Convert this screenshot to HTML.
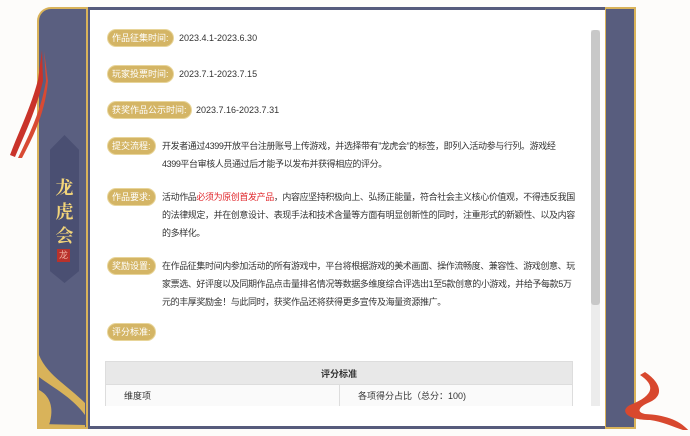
<!DOCTYPE html>
<html><head><meta charset="utf-8"><style>
*{margin:0;padding:0;box-sizing:border-box}
body{width:690px;height:436px;overflow:hidden;background:#fdfcfa;font-family:"Liberation Sans","Noto Sans CJK SC",sans-serif;position:relative}
.abs{position:absolute}
.lp{left:37px;top:7px;width:53px;height:422px;background:#5a5f80;border-radius:14px 0 0 0;border:2px solid #d9b35a;border-right:none}
.rp{left:605px;top:7px;width:31px;height:422px;background:#585d7e;border:2px solid #d9b35a;border-left:1px solid #d9b35a}
.frame{left:86px;top:7px;width:522px;height:422px;background:#565b7c;border-left:2px solid #d9b35a}
.white{left:90px;top:10px;width:515px;height:416px;background:#fff}
.tag{left:50px;top:135px;width:29px;height:148px;background:#4a4f72;clip-path:polygon(50% 0,100% 10%,100% 92%,50% 100%,0 92%,0 10%)}
.tc{left:50px;width:29px;text-align:center;color:#f3d57a;font-family:"Noto Serif CJK SC",serif;font-size:18px;font-weight:bold}
.seal{left:57px;top:249px;width:13px;height:13px;background:#b8322c;color:#f0b0a0;font-size:9px;text-align:center;line-height:13px}
.pill{position:absolute;left:107px;height:18px;padding:0 4px;background:#d4b565;border:1px solid #e8d59a;border-radius:9px;color:#fff;font-size:9px;line-height:16px;white-space:nowrap}
.t{position:absolute;font-size:9px;color:#333;line-height:18px;white-space:nowrap}
.w{letter-spacing:-0.4px}
.red{color:#e0262b}
.sb{left:591px;top:30px;width:9px;height:376px;background:#ececec}
.th{left:591px;top:30px;width:9px;height:275px;background:#c8c8c8;border-radius:3px}
table{position:absolute;left:105px;top:361px;width:468px;border-collapse:collapse;font-size:9px;color:#333}
td{border:1px solid #ddd}
</style></head><body>
<div class="abs lp"></div>
<svg class="abs" style="left:37px;top:355px" width="50" height="74"><path d="M2 0 C10 20 30 30 48 48 L48 60 C35 42 15 32 2 22Z" fill="#d9b35a"/><path d="M2 35 C12 40 18 52 12 70 L2 72Z" fill="#d9b35a"/><path d="M2 69 L48 70 L48 74 L2 74Z" fill="#d9b35a"/></svg>
<div class="abs frame"></div>
<div class="abs rp"></div>
<div class="abs white"></div>
<div class="abs tag"></div>
<div class="abs tc" style="top:174px">龙</div>
<div class="abs tc" style="top:198px">虎</div>
<div class="abs tc" style="top:222px">会</div>
<div class="abs seal">龙</div>
<svg class="abs" style="left:4px;top:45px" width="45" height="115"><path d="M38 5 L34 35 C26 65 14 88 6 110 L11 112 C21 88 32 66 39 36Z" fill="#c9332a"/><path d="M40 6 L42 36 C37 66 25 90 14 113 L18 113 C30 90 41 68 44 36Z" fill="#d84a33"/></svg>
<svg class="abs" style="left:610px;top:370px" width="80" height="60"><path d="M30 5 C45 15 45 25 20 35 C10 40 15 50 40 50 C55 52 70 60 80 62 C70 50 55 45 35 44 C25 42 30 36 40 32 C55 25 50 12 35 2Z" fill="#d8482e"/></svg>
<div class="pill" style="top:29px">作品征集时间:</div><div class="t" style="left:179px;top:29px">2023.4.1-2023.6.30</div>
<div class="pill" style="top:65px">玩家投票时间:</div><div class="t" style="left:179px;top:65px">2023.7.1-2023.7.15</div>
<div class="pill" style="top:101px">获奖作品公示时间:</div><div class="t" style="left:196px;top:101px">2023.7.16-2023.7.31</div>
<div class="pill" style="top:137px">提交流程:</div><div class="t w" style="left:162px;top:137px">开发者通过4399开放平台注册账号上传游戏，并选择带有”龙虎会”的标签，即列入活动参与行列。游戏经<br>4399平台审核人员通过后才能予以发布并获得相应的评分。</div>
<div class="pill" style="top:188px">作品要求:</div><div class="t w" style="left:162px;top:188px">活动作品<span class="red">必须为原创首发产品</span>，内容应坚持积极向上、弘扬正能量，符合社会主义核心价值观，不得违反我国<br>的法律规定，并在创意设计、表现手法和技术含量等方面有明显创新性的同时，注重形式的新颖性、以及内容<br>的多样化。</div>
<div class="pill" style="top:257px">奖励设置:</div><div class="t w" style="left:162px;top:257px">在作品征集时间内参加活动的所有游戏中，平台将根据游戏的美术画面、操作流畅度、兼容性、游戏创意、玩<br>家票选、好评度以及同期作品点击量排名情况等数据多维度综合评选出1至5款创意的小游戏，并给予每款5万<br>元的丰厚奖励金！与此同时，获奖作品还将获得更多宣传及海量资源推广。</div>
<div class="pill" style="top:323px">评分标准:</div>
<table><tr><td colspan="2" style="background:#e8e8e8;height:23px;text-align:center;font-weight:bold">评分标准</td></tr>
<tr style="background:#fafafa"><td style="height:22px;width:234px;padding-left:18px">维度项</td><td style="padding-left:18px">各项得分占比（总分：100)</td></tr></table>
<div class="abs" style="left:90px;top:406px;width:515px;height:20px;background:#fff"></div>
<div class="abs sb"></div><div class="abs th"></div>
</body></html>
